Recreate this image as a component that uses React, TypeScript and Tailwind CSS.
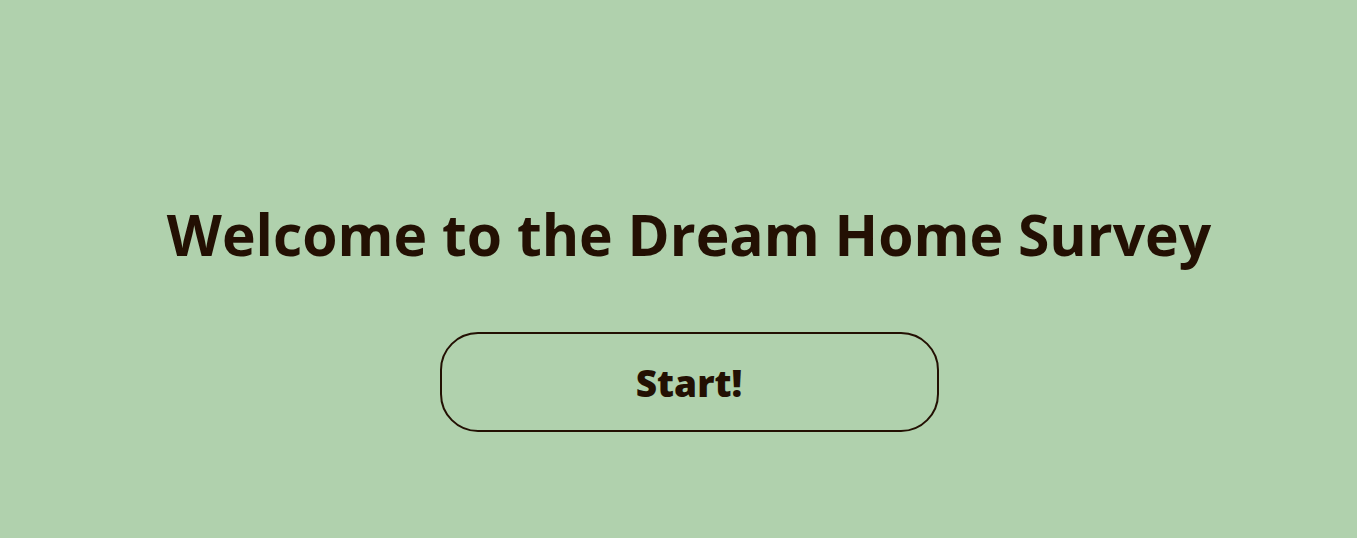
import React from 'react'

const App = () => {
  return (
    <main
      className="min-h-[538px] w-full bg-[#b0d1ad] text-[#231003] flex flex-col items-center pt-[195px] pl-[21px]"
      style={{ fontFamily: '"Open Sans", "Noto Sans", sans-serif' }}
    >
      <h1 className="text-[57px] font-bold leading-[78px]">
        Welcome to the Dream Home Survey
      </h1>
      <button
        type="button"
        className="mt-[59px] w-[499px] h-[100px] rounded-[38px] border-2 border-[#231003] text-[37px] font-extrabold pt-[2px]"
      >
        Start!
      </button>
    </main>
  )
}

export default App
